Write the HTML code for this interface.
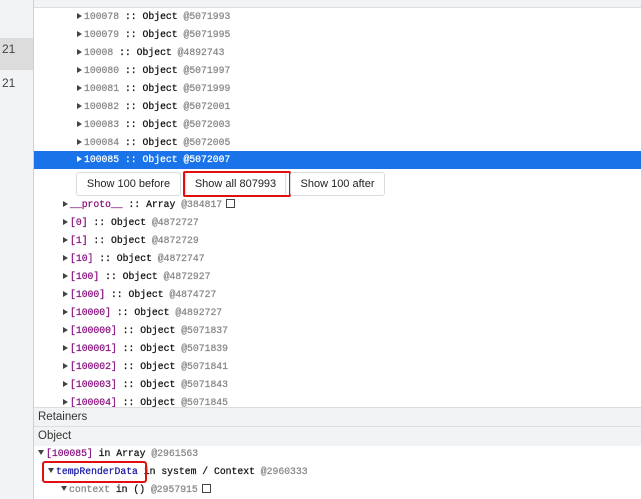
<!DOCTYPE html>
<html><head><style>
body{margin:0;width:641px;height:499px;overflow:hidden;background:#fff;position:relative;font-family:"Liberation Sans",sans-serif}
.l{position:absolute;left:0;top:0;width:33px;height:499px;background:#f1f3f4;border-right:1px solid #d0d0d0}
.r{position:absolute;height:18px;line-height:18px;font-family:"Liberation Mono",monospace;font-size:9.75px;color:#111;white-space:nowrap;left:34px;right:0;-webkit-text-stroke:0.25px}
.g{color:#888}.p{color:#881280}.b{color:#1a1aa6}
.t{display:inline-block;width:0;height:0;border-left:5px solid #444;border-top:3.5px solid transparent;border-bottom:3.5px solid transparent;margin-right:2px}
.d{display:inline-block;width:0;height:0;border-top:5px solid #444;border-left:3.5px solid transparent;border-right:3.5px solid transparent;margin-right:2px;vertical-align:1px}
.btn{position:absolute;top:172px;height:22px;border:1px solid #dadce0;border-radius:3px;font-size:11px;line-height:22px;text-align:center;color:#222;background:#fff}
.hd{position:absolute;left:34px;right:0;height:19px;line-height:19px;background:#f1f3f4;font-size:11.5px;color:#333;padding-left:4px;border-top:1px solid #ddd}
.box{display:inline-block;width:7px;height:7px;border:1px solid #444;margin-left:4px;vertical-align:-1px;-webkit-text-stroke:0}
</style></head><body>
<div class="l"></div>
<div style="position:absolute;left:0;top:38px;width:33px;height:32px;background:#dcdcdc"></div>
<div style="position:absolute;left:2px;top:42px;font-size:12px;color:#444">21</div>
<div style="position:absolute;left:2px;top:76px;font-size:12px;color:#444">21</div>
<div style="position:absolute;left:34px;top:0;right:0;height:7px;background:#f1f3f4;border-bottom:1px solid #ddd"></div>
<div class="r" style="top:8px;padding-left:43px"><span class="t"></span><span class="g">100078</span> :: Object <span class="g">@5071993</span></div>
<div class="r" style="top:26px;padding-left:43px"><span class="t"></span><span class="g">100079</span> :: Object <span class="g">@5071995</span></div>
<div class="r" style="top:44px;padding-left:43px"><span class="t"></span><span class="g">10008</span> :: Object <span class="g">@4892743</span></div>
<div class="r" style="top:62px;padding-left:43px"><span class="t"></span><span class="g">100080</span> :: Object <span class="g">@5071997</span></div>
<div class="r" style="top:80px;padding-left:43px"><span class="t"></span><span class="g">100081</span> :: Object <span class="g">@5071999</span></div>
<div class="r" style="top:98px;padding-left:43px"><span class="t"></span><span class="g">100082</span> :: Object <span class="g">@5072001</span></div>
<div class="r" style="top:116px;padding-left:43px"><span class="t"></span><span class="g">100083</span> :: Object <span class="g">@5072003</span></div>
<div class="r" style="top:134px;padding-left:43px"><span class="t"></span><span class="g">100084</span> :: Object <span class="g">@5072005</span></div>
<div class="r" style="top:151px;padding-left:43px;background:#1a73e8;color:#fff"><span class="t" style="border-left-color:#fff"></span>100085 :: Object @5072007</div>
<div class="btn" style="left:76px;width:103px">Show 100 before</div>
<div class="btn" style="left:185px;width:99px">Show all 807993</div>
<div style="position:absolute;left:183px;top:171px;width:108px;height:26px;border:2px solid #e01010;border-radius:2px;box-sizing:border-box"></div>
<div class="btn" style="left:290px;width:93px">Show 100 after</div>
<div class="r" style="top:196px;padding-left:29px"><span class="t"></span><span class="p">__proto__</span> :: Array <span class="g">@384817</span><span class="box"></span></div>
<div class="r" style="top:214px;padding-left:29px"><span class="t"></span><span class="p">[0]</span> :: Object <span class="g">@4872727</span></div>
<div class="r" style="top:232px;padding-left:29px"><span class="t"></span><span class="p">[1]</span> :: Object <span class="g">@4872729</span></div>
<div class="r" style="top:250px;padding-left:29px"><span class="t"></span><span class="p">[10]</span> :: Object <span class="g">@4872747</span></div>
<div class="r" style="top:268px;padding-left:29px"><span class="t"></span><span class="p">[100]</span> :: Object <span class="g">@4872927</span></div>
<div class="r" style="top:286px;padding-left:29px"><span class="t"></span><span class="p">[1000]</span> :: Object <span class="g">@4874727</span></div>
<div class="r" style="top:304px;padding-left:29px"><span class="t"></span><span class="p">[10000]</span> :: Object <span class="g">@4892727</span></div>
<div class="r" style="top:322px;padding-left:29px"><span class="t"></span><span class="p">[100000]</span> :: Object <span class="g">@5071837</span></div>
<div class="r" style="top:340px;padding-left:29px"><span class="t"></span><span class="p">[100001]</span> :: Object <span class="g">@5071839</span></div>
<div class="r" style="top:358px;padding-left:29px"><span class="t"></span><span class="p">[100002]</span> :: Object <span class="g">@5071841</span></div>
<div class="r" style="top:376px;padding-left:29px"><span class="t"></span><span class="p">[100003]</span> :: Object <span class="g">@5071843</span></div>
<div class="r" style="top:394px;padding-left:29px"><span class="t"></span><span class="p">[100004]</span> :: Object <span class="g">@5071845</span></div>
<div class="hd" style="top:407px">Retainers</div>
<div class="hd" style="top:426px">Object</div>
<div class="r" style="top:445px;padding-left:4px"><span class="d"></span><span class="p">[100085]</span> in Array <span class="g">@2961563</span></div>
<div class="r" style="top:463px;padding-left:14px"><span class="d"></span><span class="b">tempRenderData</span> in system / Context <span class="g">@2960333</span></div>
<div style="position:absolute;left:42px;top:461px;width:105px;height:22px;border:2px solid #e01010;border-radius:3px;box-sizing:border-box"></div>
<div class="r" style="top:481px;padding-left:27px"><span class="d"></span><span class="g">context</span> in () <span class="g">@2957915</span><span class="box"></span></div>
</body></html>
